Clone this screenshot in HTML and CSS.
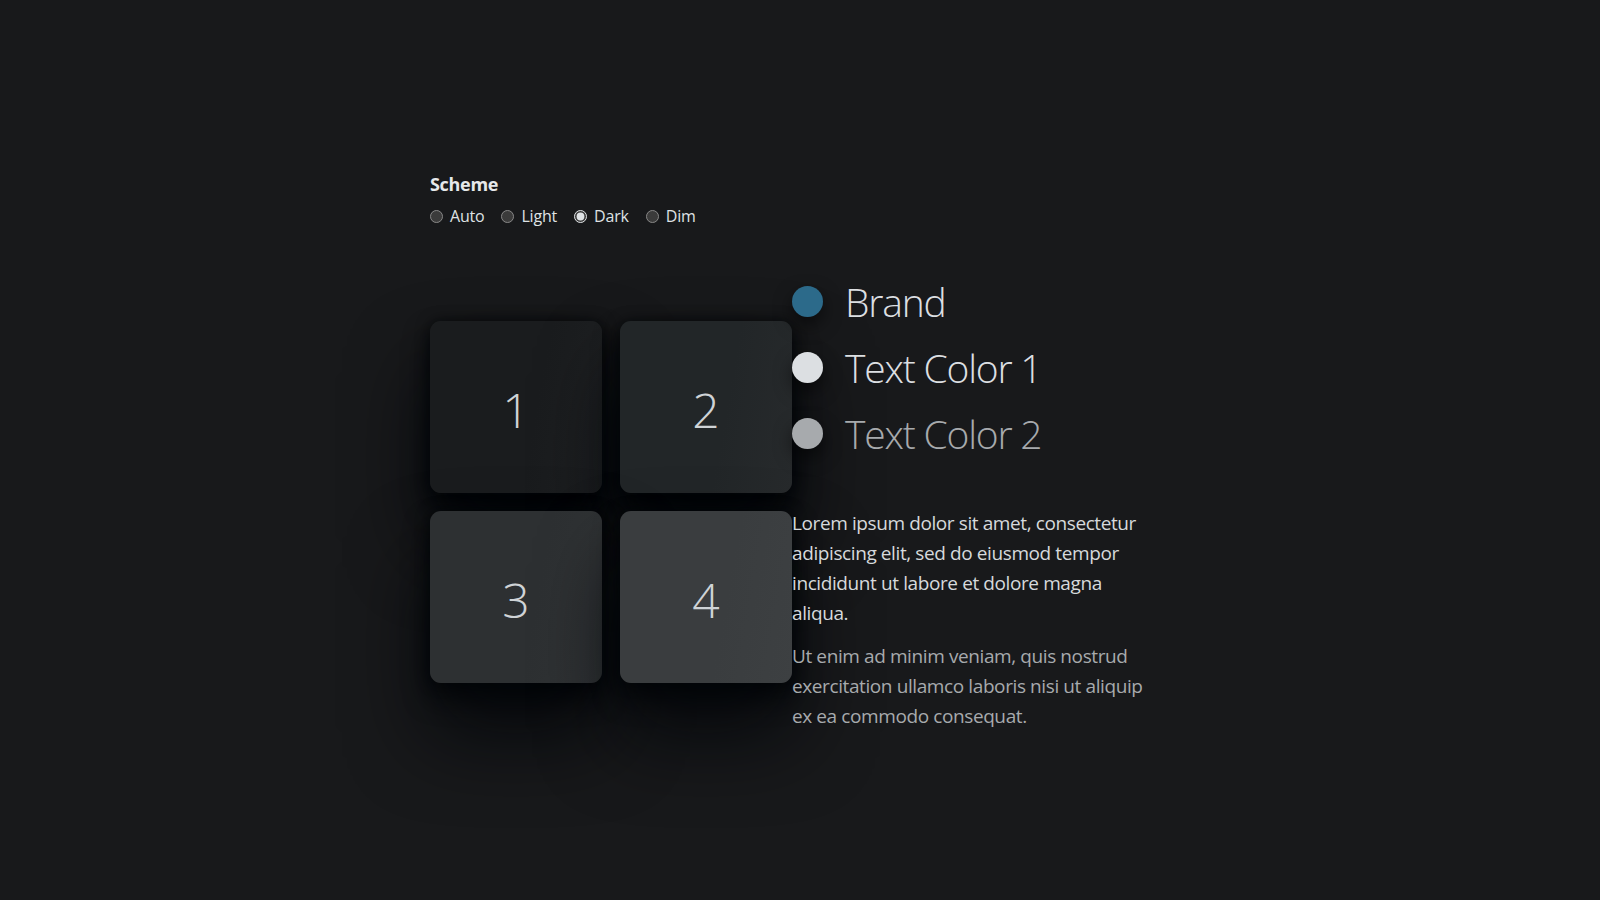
FILE: index.html
```html
<!DOCTYPE html>
<html lang="en">
<head>
<meta charset="utf-8">
<title>Scheme</title>
<link rel="stylesheet" href="styles.css">
</head>
<body>
<main class="page">
  <fieldset class="scheme">
    <legend class="scheme-title">Scheme</legend>
    <div class="scheme-options">
      <label class="opt"><input type="radio" name="scheme"> Auto</label>
      <label class="opt"><input type="radio" name="scheme"> Light</label>
      <label class="opt"><input type="radio" name="scheme" checked> Dark</label>
      <label class="opt"><input type="radio" name="scheme"> Dim</label>
    </div>
  </fieldset>

  <section class="demo">
    <div class="grid">
      <div class="card c1">1</div>
      <div class="card c2">2</div>
      <div class="card c3">3</div>
      <div class="card c4">4</div>
    </div>
    <div class="side">
      <ul class="swatches">
        <li class="swatch"><span class="dot brand"></span><span class="sw-label t1">Brand</span></li>
        <li class="swatch"><span class="dot text1"></span><span class="sw-label t1">Text Color 1</span></li>
        <li class="swatch"><span class="dot text2"></span><span class="sw-label t2">Text Color 2</span></li>
      </ul>
      <p class="copy t1">Lorem ipsum dolor sit amet, consectetur adipiscing elit, sed do eiusmod tempor incididunt ut labore et dolore magna aliqua.</p>
      <p class="copy t2">Ut enim ad minim veniam, quis nostrud exercitation ullamco laboris nisi ut aliquip ex ea commodo consequat.</p>
    </div>
  </section>
</main>
</body>
</html>
```

FILE: styles.css
```css
html, body {
  margin: 0;
  padding: 0;
  background: #18191b;
  color-scheme: dark;
}
body {
  font-family: "Open Sans", "Noto Sans", sans-serif;
  color: #dfe2e4;
  min-height: 900px;
}
.page {
  width: 740px;
  margin: 0 auto;
  padding-top: 172px;
}
.scheme {
  border: 0;
  margin: 0;
  padding: 0;
}
.scheme-title {
  padding: 0;
  font-weight: 700;
  font-size: 18px;
  line-height: 24px;
  color: #e6e8ea;
  letter-spacing: -0.3px;
}
.scheme-options {
  display: flex;
  gap: 17px;
  margin-top: 9px;
}
.opt {
  display: flex;
  align-items: center;
  gap: 7px;
  font-size: 16px;
  color: #dfe2e4;
  letter-spacing: -0.2px;
}
.opt input {
  margin: 0;
  width: 13px;
  height: 13px;
  accent-color: #dfe3e6;
}
.demo {
  display: flex;
  align-items: center;
  margin-top: 45px;
}
.grid {
  display: grid;
  grid-template-columns: 172px 172px;
  grid-auto-rows: 172px;
  gap: 18px;
  flex: none;
}
.card {
  display: flex;
  align-items: center;
  justify-content: center;
  padding-top: 6px;
  box-sizing: border-box;
  border-radius: 11px;
  font-size: 48px;
  font-weight: 300;
  color: #cfd3d6;
  box-shadow: 0 50px 80px rgba(2, 5, 8, 0.85), 0 14px 26px rgba(2, 5, 8, 0.9), 0 0 14px rgba(2, 5, 8, 0.7);
}
.c1 { background: linear-gradient(100deg, #1a1c1e 60%, #1e2022); }
.c2 { background: linear-gradient(100deg, #222628 60%, #272a2c); }
.c3 { background: linear-gradient(100deg, #2d3032 60%, #303335); }
.c4 { background: linear-gradient(100deg, #3a3d3f 60%, #3d4042); }
.side {
  width: 378px;
  flex: none;
}
.swatches {
  list-style: none;
  margin: 0 0 46px;
  padding: 0;
  display: flex;
  flex-direction: column;
  gap: 8px;
}
.swatch {
  display: flex;
  align-items: center;
  gap: 22px;
  height: 58px;
}
.dot {
  width: 31px;
  height: 31px;
  border-radius: 50%;
  flex: none;
  box-shadow: 0 8px 18px rgba(0, 0, 0, 0.55);
}
.brand { background: #2c6a8a; }
.text1 { background: #dcdfe2; }
.text2 { background: #a7aaad; }
.sw-label {
  font-size: 39px;
  font-weight: 300;
  line-height: 1;
  letter-spacing: -1.2px;
}
.t1 { color: #dcdfe2; }
.t2 { color: #a7aaad; }
.copy {
  margin: 0;
  max-width: 362px;
  font-size: 19px;
  line-height: 30px;
  font-weight: 400;
  letter-spacing: -0.4px;
}
.copy.t1 { color: #d6d9dc; }
.copy + .copy {
  margin-top: 13px;
}
```
